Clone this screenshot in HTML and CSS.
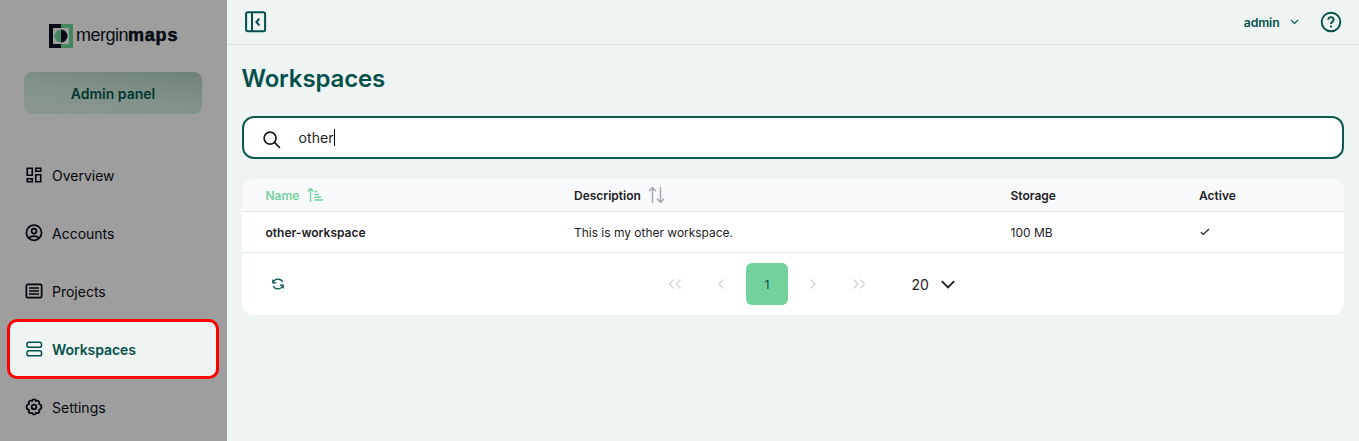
FILE: index.html
```html
<!DOCTYPE html>
<html lang="en">
<head>
<meta charset="utf-8">
<title>Workspaces</title>
<link rel="stylesheet" href="styles.css">
</head>
<body>
<div class="app">
  <aside class="sidebar">
    <div class="logo">
      <svg width="24" height="24" viewBox="0 0 24 24"><path fill="#060a12" d="M0 0h12v4H4v16h8v4H0z"/><path fill="#448660" d="M12 0h12v24H12v-4h8V4h-8z"/><path fill="#448660" d="M12 5.500a6.500 6.500 0 0 0 0 13z"/><path fill="#060a12" d="M12 5.500a6.500 6.500 0 0 1 0 13z"/></svg>
      <span class="logo-text"><span class="logo-thin">mergin</span><span class="logo-bold">maps</span></span>
    </div>
    <div class="panel-button">Admin panel</div>
    <nav class="menu">
      <a class="menu-item"><svg class="menu-icon" viewBox="0 0 18 18"><g fill="none" stroke="currentColor" stroke-width="1.600"><path d="M2.250 2.250h5v7h-5zM10.750 2.250h5v3h-5zM10.750 8.750h5v7h-5zM2.250 12.750h5v3h-5z"/></g></svg><span>Overview</span></a>
      <a class="menu-item"><svg class="menu-icon" viewBox="0 0 18 18"><g fill="none" stroke="currentColor" stroke-width="1.700"><circle cx="9" cy="8.800" r="7.600"/><circle cx="9" cy="7.100" r="2.500"/><path d="M3.700 14c2.800-2.500 7.800-2.500 10.600 0"/></g></svg><span>Accounts</span></a>
      <a class="menu-item"><svg class="menu-icon" viewBox="0 0 18 18"><g fill="none" stroke="currentColor" stroke-width="1.700"><rect x="1.350" y="2.350" width="15.300" height="13.300" rx="1.500"/><path stroke-width="1.500" d="M4 6h10M4 9h10M4 12h10"/></g></svg><span>Projects</span></a>
      <a class="menu-item active"><svg class="menu-icon" viewBox="0 0 18 18"><g fill="none" stroke="currentColor" stroke-width="1.500"><rect x="2" y="2.300" width="14.500" height="5" rx="1.800"/><rect x="2" y="10.800" width="14.500" height="5" rx="1.800"/></g></svg><span>Workspaces</span></a>
      <a class="menu-item"><svg class="menu-icon" viewBox="0 0 18 18"><g fill="none" stroke="currentColor" stroke-width="1.800" stroke-linejoin="round"><path d="M7 3 C7.500 .7 10.500 .7 11 3C13.200 1.900 15.100 3.800 14 6C17.300 6.800 17.300 11 14 11.800C15.100 14 13.200 15.900 11 14.800C10.500 17.100 7.500 17.100 7 14.800C4.800 15.900 2.900 14 4 11.800C.7 11 .7 6.800 4 6C2.900 3.800 4.800 1.900 7 3z"/><circle cx="9" cy="8.900" r="2.300"/></g></svg><span>Settings</span></a>
    </nav>
  </aside>
  <main class="main">
    <header class="topbar">
      <svg width="22" height="22" viewBox="0 0 22 22" fill="none" stroke="#05504a" stroke-width="2"><rect x="1.100" y="1.300" width="19" height="19" rx="1.800"/><path d="M7 1.500v19M14.400 7.700 11.400 11l3 3.300"/></svg>
      <div class="account">
        <span class="account-name">admin</span>
        <svg class="account-arrow" width="9" height="6" viewBox="0 0 9 6" fill="none" stroke="#05504a" stroke-width="1.100"><path d="M1 1l3.500 3.500L8 1"/></svg>
        <svg width="22" height="22" viewBox="0 0 22 22" fill="none" stroke="#05504a" stroke-width="1.900"><circle cx="11" cy="11" r="9.300"/><path d="M8.200 8.800C8.300 5.300 13.700 5.300 13.700 8.600c0 2-2.700 2.300-2.700 4.500"/><path d="M11 14.600v2"/></svg>
      </div>
    </header>
    <section class="content">
      <h1 class="title">Workspaces</h1>
      <div class="search">
        <svg width="18" height="18" viewBox="0 0 18 18" fill="none" stroke="#1c1c24" stroke-width="1.700"><circle cx="7.100" cy="7.100" r="6"/><path d="m11.400 11.400 5.500 5.500"/></svg>
        <span class="query">other</span><span class="caret"></span>
      </div>
      <div class="card">
        <div class="row head">
          <div class="cell sorted">Name<svg class="sort" width="17" height="16" viewBox="0 0 17 16" fill="none" stroke="currentColor" stroke-width="1.400"><path d="M3.500 15V2M.6 4.500 3.500 1.500l2.900 3M7.500 4.500H10M7.500 7.500H12M7.500 10.300h6.500M7.500 13H16"/></svg></div>
          <div class="cell">Description<svg class="sort muted" width="17" height="18" viewBox="0 0 17 18" fill="none" stroke="currentColor" stroke-width="1.500"><path d="M4.500 17V2M1 5.300 4.500 1.700 8 5.300M12.500 1v15M9 12.700l3.500 3.600 3.500-3.600"/></svg></div>
          <div class="cell">Storage</div>
          <div class="cell">Active</div>
        </div>
        <div class="row body">
          <div class="cell name">other-workspace</div>
          <div class="cell description">This is my other workspace.</div>
          <div class="cell">100 MB</div>
          <div class="cell"><svg class="check" width="10" height="8" viewBox="0 0 10 8" fill="none" stroke="#20242c" stroke-width="1.200"><path d="M.8 4.200 3.300 6.500 9 1"/></svg></div>
        </div>
        <div class="pager">
          <svg class="refresh" width="12" height="12" viewBox="0 0 12 12" fill="none" stroke="#05504a" stroke-width="1.200"><path d="M1.200 4.700C2.400.3 8.700-.1 10.600 4M10.800 7.300C9.600 11.700 3.300 12.100 1.400 8M.8 1.500v3.300h3.400M11.200 10.500V7.200H7.800"/></svg>
          <div class="pages">
            <span class="page"><svg width="14" height="12" viewBox="0 0 14 12"><path d="M6 1.500 1.500 6 6 10.500M12.500 1.500 8 6l4.500 4.500"/></svg></span>
            <span class="page"><svg width="14" height="12" viewBox="0 0 14 12"><path d="M9.500 1.500 5 6l4.500 4.500"/></svg></span>
            <span class="page current">1</span>
            <span class="page"><svg width="14" height="12" viewBox="0 0 14 12"><path d="M4.500 1.500 9 6l-4.500 4.500"/></svg></span>
            <span class="page"><svg width="14" height="12" viewBox="0 0 14 12"><path d="M1.500 1.500 6 6l-4.500 4.500M8 1.500 12.500 6 8 10.500"/></svg></span>
          </div>
          <div class="size"><span>20</span><svg width="14" height="9" viewBox="0 0 14 9" fill="none" stroke="#1c1c24" stroke-width="1.800"><path d="M.8 1.200 7 7.400l6.200-6.200"/></svg></div>
        </div>
      </div>
    </section>
  </main>
</div>
</body>
</html>
```
FILE: styles.css
```css
* { box-sizing: border-box; }
body { margin: 0; font-family: Inter, sans-serif; color: #1c1c24; background: #eef4f2; }
svg { display: block; flex: none; }
.app { display: flex; height: 441px; overflow: hidden; }
.sidebar { width: 227px; flex: none; background: #9e9e9e; padding-top: 24px; }
.logo { display: flex; height: 24px; margin-left: 49px; gap: 3px; }
.logo-text { display: flex; font: 18px/22px "Liberation Sans", sans-serif; color: #0a0c14; }
.logo-thin { width: 52px; letter-spacing: -0.5px; }
.logo-bold { font-size: 18px; font-weight: 700; -webkit-text-stroke: 0.6px #0a0c14; letter-spacing: 0.800px; }
.panel-button { margin: 24px 25px 0 24px; height: 42px; border-radius: 8px; background: linear-gradient(8deg, #8b9790 0%, #82938a 45%, #6f8278 100%); color: #033731; font-size: 14px; font-weight: 600; line-height: 43px; text-align: center; }
.menu { display: flex; flex-direction: column; padding: 32px 7px 0; }
.menu-item { display: flex; align-items: center; gap: 9px; width: 212px; height: 58px; padding-left: 18px; font-size: 14px; color: #05070c; }
.menu-icon { width: 18px; height: 18px; }
.menu-item.active { height: 60px; margin: -1px 0; border: 3px solid #f00; border-radius: 10px; padding-left: 15px; background: #eef4f2; color: #05504a; font-weight: 600; letter-spacing: -0.07px; }
.main { flex: 1; min-width: 0; }
.topbar { display: flex; align-items: center; justify-content: space-between; height: 45px; padding: 0 17.500px 0 18px; border-bottom: 1px solid #d9e1e3; }
.account { display: flex; align-items: center; }
.account-name { font-size: 12.250px; font-weight: 600; letter-spacing: -0.15px; color: #05504a; }
.account-arrow { margin: 0 21px 0 10px; }
.content { padding: 19px 15px 0; }
.title { margin: 0 0 0 -0.5px; font-size: 24px; line-height: 30px; font-weight: 600; letter-spacing: -0.14px; color: #05504a; }
.search { display: flex; align-items: center; height: 43px; margin-top: 22px; padding: 0 19px; border: 2px solid #0f5a50; border-radius: 12px; background: #fff; }
.search svg { margin-top: 4px; }
.query { margin-left: 17.500px; font-size: 14px; letter-spacing: 0.08px; }
.caret { width: 1px; height: 17px; background: #000; }
.card { margin-top: 20px; height: 136px; border-radius: 12px; background: #fff; overflow: hidden; }
.row { display: grid; grid-template-columns: 308.500px 436.500px 188.500px 1fr; padding-left: 23.500px; align-items: center; border-bottom: 1px solid #e4e7ea; font-size: 12px; }
.head { height: 33px; background: #f8f9fb; font-weight: 600; }
.body { height: 41px; }
.name { font-weight: 600; }
.cell { display: flex; align-items: center; }
.description { letter-spacing: -0.02px; }
.sorted { color: #73d29c; }
.sort { margin-left: 7.500px; }
.muted { color: #a7abb0; }
.check { margin-left: 1px; }
.pager { display: flex; align-items: center; height: 62px; padding-left: 30px; }
.pages { display: flex; gap: 4px; margin-left: 370px; }
.page { display: flex; align-items: center; justify-content: center; width: 42px; height: 42px; border-radius: 6px; font-size: 12.250px; }
.page path { fill: none; stroke: #d4d6d8; stroke-width: 1.500; }
.current { background: #73d29c; color: #05504a; }
.size { display: flex; align-items: center; gap: 12px; margin-left: 31.500px; font-size: 14px; }
```
